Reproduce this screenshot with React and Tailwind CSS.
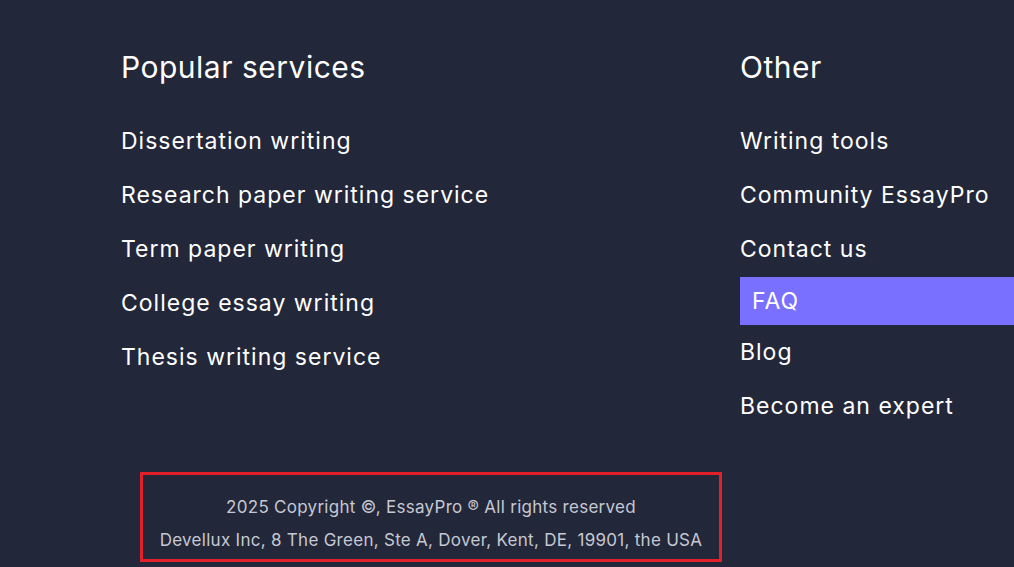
import React from "react";

const font = { fontFamily: "Inter, 'Open Sans', sans-serif" };

export default function App() {
  const popular = [
    "Dissertation writing",
    "Research paper writing service",
    "Term paper writing",
    "College essay writing",
    "Thesis writing service",
  ];
  return (
    <div className="w-[1014px] h-[567px] overflow-hidden bg-[#23273a] text-white" style={font}>
      <div className="flex pl-[121px] pt-[47px]">
        <div className="w-[619px] flex flex-col">
          <h3 className="text-[30px] leading-[40px] font-normal tracking-[0.5px]">Popular services</h3>
          <ul className="mt-[39px] flex flex-col gap-[24px]">
            {popular.map((t) => (
              <li key={t} className="text-[23px] leading-[30px] tracking-[1px]">{t}</li>
            ))}
          </ul>
        </div>
        <div className="flex-1 flex flex-col">
          <h3 className="text-[30px] leading-[40px] font-normal tracking-[0.5px]">Other</h3>
          <ul className="mt-[39px] flex flex-col text-[23px] leading-[30px] tracking-[1px]">
            <li>Writing tools</li>
            <li className="mt-[24px]">Community EssayPro</li>
            <li className="mt-[24px]">Contact us</li>
            <li className="mt-[13px] h-[48px] flex items-center pl-[12px] bg-[#7a70ff]">FAQ</li>
            <li className="mt-[12px]">Blog</li>
            <li className="mt-[24px]">Become an expert</li>
          </ul>
        </div>
      </div>
      <div className="ml-[140px] mt-[51px] w-[582px] h-[90px] border-[3px] border-[#e3202a] flex flex-col items-center pt-[16px] text-[17px] tracking-[0.28px] text-[#c6c8d1]">
        <p className="leading-[33px]">2025 Copyright ©, EssayPro ® All rights reserved</p>
        <p className="leading-[33px]">Devellux Inc, 8 The Green, Ste A, Dover, Kent, DE, 19901, the USA</p>
      </div>
    </div>
  );
}
